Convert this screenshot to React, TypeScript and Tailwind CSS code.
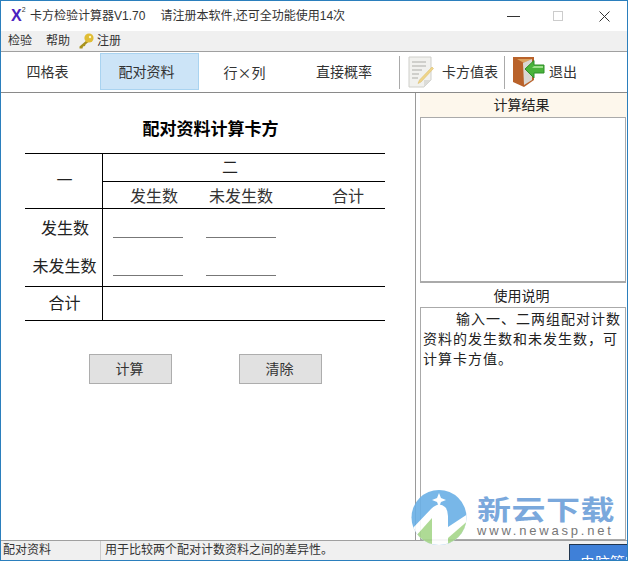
import React from "react";

const cjk = "font-['Liberation_Sans','Noto_Sans_CJK_SC',sans-serif]";

function KeyIcon() {
  return (
    <svg width="16" height="16" viewBox="0 0 16 16" className="shrink-0">
      <path d="M9 7 L1.5 13.5 L1.5 15.5 L4.5 15.5 L5 13.5 L7 13 L7.5 11.5 L11 8.5" fill="#a8921e" />
      <circle cx="11" cy="5" r="4.6" fill="#e0bd35" />
      <circle cx="12" cy="4" r="1.2" fill="#fff6c0" />
    </svg>
  );
}

function NoteIcon() {
  return (
    <svg width="26" height="32" viewBox="0 0 26 32" className="shrink-0">
      <path d="M1 1 H23 V24 L16 31 H1 Z" fill="#f1f1ee" stroke="#cfcfca" />
      <path d="M23 24 L16 31 V24 Z" fill="#dcdcd8" />
      <path d="M4 6 H18 M4 10 H18 M4 14 H14 M4 18 H11 M4 22 H10" stroke="#c4c4c0" strokeWidth="1.6" />
      <path d="M24 11 L25.5 12.5 L13 26 L10 27.5 L11.5 24 Z" fill="#efd58a" stroke="#d8b860" strokeWidth="0.5" />
    </svg>
  );
}

function DoorIcon() {
  return (
    <svg width="32" height="32" viewBox="0 0 32 32" className="shrink-0">
      <path d="M0 1 H21 V24 L11 31 L0 26 Z" fill="#b9622a" />
      <path d="M4 3 H19 L11 7 Z" fill="#dca25e" />
      <path d="M10 7 L19 3 V24 L11 29 Z" fill="#d9d7d3" />
      <path d="M12 13 L21 4.5 V9 H31 V17 H21 V22 Z" fill="#49b33a" stroke="#2f8f28" />
      <path d="M21 10 H30 V12 H19 Z" fill="#9ce08a" />
    </svg>
  );
}

function WatermarkLogo() {
  return (
    <svg width="56" height="55" viewBox="0 0 56 55" className="opacity-90">
      <defs>
        <clipPath id="logo-disc">
          <circle cx="28" cy="27.5" r="27.5" />
        </clipPath>
      </defs>
      <g clipPath="url(#logo-disc)">
        <rect width="56" height="55" fill="#6ab0e6" />
        <path d="M0 40 L20 19 Q28 11 34 17 Q37 20 37 26 V37 L60 22 V60 H0 Z" fill="#ffffff" />
        <path d="M4 47 L21 28 V60 H4 Z" fill="#a6d68a" />
        <path d="M37 48 L60 28 V60 H37 Z" fill="#a6d68a" />
      </g>
      <path d="M28 3 L30 8 L35 10 L30 12 L28 17 L26 12 L21 10 L26 8 Z" fill="#ffffff" />
    </svg>
  );
}

function TableLabel({ children, className }: { children: React.ReactNode; className?: string }) {
  return <div className={`flex items-center justify-center text-[16px] text-[#222] ${className ?? ""}`}>{children}</div>;
}

function Field() {
  return <div className="w-[70px] h-px bg-[#777]" />;
}

export default function App() {
  return (
    <div className={`relative w-[628px] h-[561px] overflow-hidden flex flex-col bg-white border border-[#2b7fbd] text-[#222] ${cjk}`}>
      {/* Title bar */}
      <div className="h-[30px] flex items-center shrink-0 text-[12px] text-[#333]">
        <div className="ml-[10px] w-[19px] flex items-start text-[#4a22c0] font-bold text-[16px] leading-none">
          X<span className="text-[7px] leading-none font-normal text-[#333] mt-[-2px]">2</span>
        </div>
        <span>卡方检验计算器V1.70</span>
        <span className="ml-[15px]">请注册本软件,还可全功能使用14次</span>
        <div className="ml-auto flex items-center">
          <div className="w-[13px] h-px bg-[#333] mr-[33px]" />
          <div className="w-[10px] h-[10px] border border-[#ccc] mr-[36px]" />
          <svg width="11" height="11" viewBox="0 0 11 11" className="mr-[17px]">
            <path d="M0.5 0.5 L10.5 10.5 M10.5 0.5 L0.5 10.5" stroke="#333" strokeWidth="1" />
          </svg>
        </div>
      </div>

      {/* Menu */}
      <div className="h-[21px] shrink-0 flex items-center bg-[#f0f0f0] border-b border-[#a0a0a0] text-[12px] text-[#333] pl-[7px]">
        <span>检验</span>
        <span className="ml-[14px]">帮助</span>
        <span className="ml-[8px] flex items-center gap-[3px]"><KeyIcon />注册</span>
      </div>

      {/* Toolbar */}
      <div className="h-[41px] shrink-0 flex items-center border-b border-[#8a8a8a] text-[14px] text-[#333]">
        <div className="w-[99px] text-center pr-[6px]">四格表</div>
        <div className="w-[99px] h-[37px] self-start mt-px flex items-center justify-center pr-[6px] pt-[2px] bg-[#cce4f7] border border-[#a9d3f0]">配对资料</div>
        <div className="w-[96px] text-center pr-[5px] font-['Noto_Sans_CJK_SC',sans-serif]">行×列</div>
        <div className="w-[88px] text-center pl-[10px] whitespace-nowrap">直接概率</div>
        <div className="ml-[16px] w-px h-[33px] bg-[#aaa]" />
        <div className="ml-[8px]"><NoteIcon /></div>
        <div className="ml-[8px] w-[56px] whitespace-nowrap">卡方值表</div>
        <div className="ml-[6px] w-px h-[33px] bg-[#aaa]" />
        <div className="ml-[8px]"><DoorIcon /></div>
        <div className="ml-[4px]">退出</div>
      </div>

      {/* Main */}
      <div className="flex-1 min-h-0 flex">
        <div className="w-[415px] border-r border-[#9a9a9a] pl-[24px] flex flex-col">
          <h1 className="mt-[27px] h-[20px] leading-[20px] w-[360px] pl-[11px] text-center text-[17px] font-bold text-black whitespace-nowrap">配对资料计算卡方</h1>
          <div className="mt-[13px] w-[360px] border-y border-black grid grid-cols-[78px_1fr] text-[16px]">
            <TableLabel className="h-[55px] pl-[2px] border-r border-black border-b">一</TableLabel>
            <div className="border-b border-black">
              <TableLabel className="h-[28px] pr-[28px] border-b border-black">二</TableLabel>
              <div className="h-[26px] pt-[3px] grid grid-cols-[102px_72px_1fr] items-center text-center text-[#333]">
                <div>发生数</div>
                <div className="whitespace-nowrap">未发生数</div>
                <div className="pl-[34px] whitespace-nowrap">合计</div>
              </div>
            </div>
            <div className="h-[78px] border-r border-b border-black flex flex-col">
              <TableLabel className="h-[38px] pt-[1px] pl-[3px]">发生数</TableLabel>
              <TableLabel className="h-[38px] pt-[1px] pl-[2px]">未发生数</TableLabel>
            </div>
            <div className="h-[78px] border-b border-black pl-[10px] pt-[28px] flex flex-col gap-[37px]">
              <div className="flex gap-[23px]"><Field /><Field /></div>
              <div className="flex gap-[23px]"><Field /><Field /></div>
            </div>
            <TableLabel className="h-[33px] pl-[2px] border-r border-black">合计</TableLabel>
            <div />
          </div>
          <div className="mt-[33px] ml-[64px] flex gap-[67px] text-[14px]">
            <button className="w-[83px] h-[30px] pr-[2px] bg-[#e1e1e1] border border-[#adadad] text-[#333]">计算</button>
            <button className="w-[83px] h-[30px] pr-[2px] bg-[#e1e1e1] border border-[#adadad] text-[#333]">清除</button>
          </div>
        </div>

        <div className="flex-1 flex flex-col text-[14px] min-w-0">
          <div className="h-[24px] ml-[4px] pr-[4px] bg-[#fdf7ec] text-center leading-[24px] shrink-0">计算结果</div>
          <div className="h-[166px] ml-[4px] mr-[1px] border border-[#aaa] border-b-2 shrink-0" />
          <div className="h-[23px] mt-[1px] ml-[4px] pr-[4px] text-center leading-[24px] shrink-0">使用说明</div>
          <div className="flex-1 ml-[4px] mr-[1px] border border-[#aaa] pl-[2px] py-[1px] leading-[20px] tracking-[1px] text-[14px] text-[#222]">
            <span className="pl-[33px]">输入一、二两组配对计数资料的发生数和未发生数，可计算卡方值。</span>
          </div>
        </div>
      </div>

      {/* Status */}
      <div className="h-[20px] shrink-0 flex items-center bg-[#f0f0f0] border-t border-[#a0a0a0] text-[12px] text-[#333]">
        <div className="w-[100px] pl-[2px] border-r border-[#ccc] h-full leading-[19px]">配对资料</div>
        <div className="pl-[4px] leading-[19px]">用于比较两个配对计数资料之间的差异性。</div>
      </div>

      {/* Watermark */}
      <div className="absolute left-[410px] top-[489px]"><WatermarkLogo /></div>
      <div className="absolute left-[476px] top-[496px] text-[34px] leading-[26px] font-bold text-[#7aa8dc] whitespace-nowrap tracking-[0.5px] scale-y-[0.8]">新云下载</div>
      <div className="absolute left-[476px] top-[522px] text-[13px] leading-[15px] text-[#777] tracking-[2.8px] whitespace-nowrap">www.newasp.net</div>
      <div className="absolute left-[568px] top-[543px] w-[60px] h-[18px] bg-[#3f80d8] border border-[#22364f] text-white text-[15px] pl-[10px] pt-[9px] leading-[18px] overflow-hidden whitespace-nowrap">电脑管家</div>
    </div>
  );
}
